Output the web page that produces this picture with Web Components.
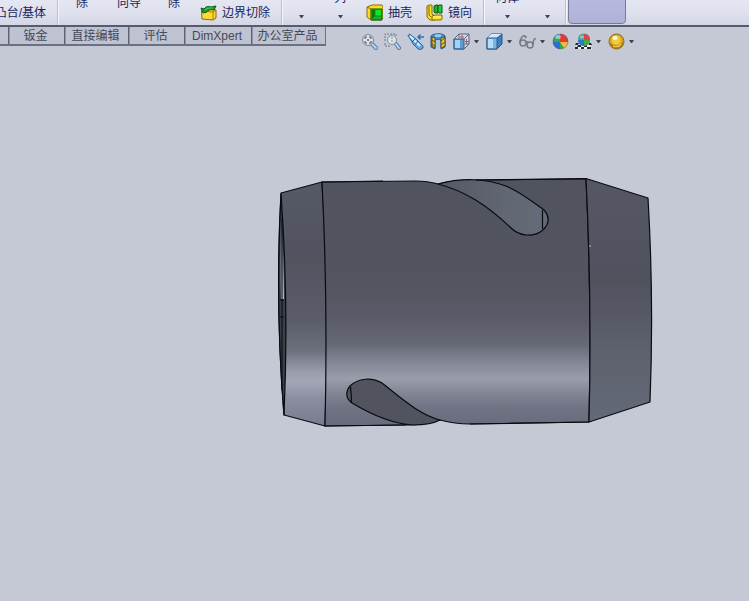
<!DOCTYPE html>
<html lang="zh-CN">
<head>
<meta charset="utf-8">
<title>零件</title>
<style>
html,body{height:100%}
body{margin:0;background:#c5c9d5;font:12px/16px "Liberation Sans","Noto Sans CJK SC",sans-serif;color:#20245c;overflow:hidden}
</style>
</head>
<body>
<cad-app></cad-app>
<script>
const icons = {
boundary:'<path d="M1.500 6.500L6 5l10 1v8l-3 2-11-1z" fill="#ffd936" stroke="#8a6a00"/><path d="M2 7l11 1v8M13 8l3-2" fill="none" stroke="#a87d00"/><path d="M3 9L1 4l3 1c2-3 5-3 7-2l5-1-2 4c-4-1-6 0-7 2z" fill="#1f9b30" stroke="#0b5b17"/><path d="M5 6c2-2 5-2 8-2" fill="none" stroke="#55c862"/>',
shell:'<path d="M1 3l5-2h10l1 2v11l-2 2H5l-4-3z" fill="#f6df20" stroke="#8a7100"/><path d="M5 5h11v11H5z" fill="#12b622" stroke="#075c0c"/><path d="M6 6h3v6l-3 3z" fill="#087a12"/><path d="M9 6h6v6H9z" fill="#18e22e"/><path d="M9 6v6h6M9 12l-3 3" fill="none" stroke="#0a8f18"/><path d="M1 3l4 2v11" fill="none" stroke="#8a7100"/>',
mirror:'<path d="M1 2l2-1h3v9l3 2v4H4l-3-3z" fill="#f8dc24" stroke="#8a6a00"/><path d="M3 2v9l2 2" fill="none" stroke="#8a6a00"/><path d="M8 2l2-1h2v8h-3l-1-1z" fill="#1bb32b" stroke="#075c0c"/><path d="M12 2l1-1h3v8h-3l-1-1z" fill="#26c637" stroke="#075c0c"/><path d="M6 12l3-1h7v4l-1 1H6z" fill="#f8dc24" stroke="#8a6a00"/><path d="M7 13h8" stroke="#fff3a0"/>',
fit:'<path d="M11 11l4 4" stroke="#5880b4" stroke-width="4" stroke-linecap="round"/><path d="M11 11l4 4" stroke="#b8d5ed" stroke-width="2" stroke-linecap="round"/><circle cx="7" cy="7" r="5.500" fill="#dce2ec" stroke="#7b8190"/><path d="M4 6V4h2M8 4h2v2M10 8v2H8M6 10H4V8" fill="none" stroke="#4a5060"/><rect x="6" y="6" width="2" height="2" fill="#7b8290"/>',
area:'<path d="M1 8V1h11v3M1 10v3h5" fill="none" stroke="#737988" stroke-dasharray="2 1"/><path d="M12 11l3 4" stroke="#5880b4" stroke-width="4" stroke-linecap="round"/><path d="M12 11l3 4" stroke="#b8d5ed" stroke-width="2" stroke-linecap="round"/><circle cx="8" cy="7" r="4.500" fill="#dce2ec" stroke="#868c9b"/><path d="M8 4v6" stroke="#8b91a0" stroke-dasharray="2 1"/>',
prev:'<path d="M1 2.500L2.500 1 9 6l2 2 5 5v2l-2 1.500-3-.5-5-5-1-2z" fill="#67a9df" stroke="#2f669e"/><path d="M3 3l5 5 5 5" fill="none" stroke="#d3ebfa" stroke-width="2"/><path d="M5 9l3-3M8 12l3-4" stroke="#2f669e"/><path d="M17 4h-6M13.500 1.500L11 4l2.500 2.500" fill="none" stroke="#2f73b5" stroke-width="1.500"/>',
section:'<path d="M1 3c3-3 12-3 14 0v11l-4 2V7H5v9l-4-2z" fill="#3c8fce" stroke="#275684"/><path d="M4 2c2-1 6-1 8 0l-2 2H6z" fill="#9ccfef"/><path d="M2 4l3 1v10l-3-2zM11 5l4-1v9l-4 2z" fill="#f4ca20" stroke="#5a5130"/><path d="M2 7l3 2M2 11l3 2M11 8l4-3M11 12l4-3" stroke="#5a5130"/><path d="M6 7h4v7l-2 1-2-1z" fill="#a8c8e0"/>',
orient:'<path d="M1 6l5-5h10v10l-5 5H1z" fill="#d4dbe6" stroke="#5a6375"/><path d="M1 6h10v10H1z" fill="#5b9dd2" stroke="#2e5d90"/><path d="M2 7h5v8H2z" fill="#a6d2ef"/><path d="M11 6l5-5M6 1v4M12 11h4" fill="none" stroke="#5a6375"/><path d="M9 2v4M7 4h4M13.500 6v5M12 8.500h4" stroke="#b8525c"/>',
cube:'<path d="M1 5l4-4h11v10l-5 5H1z" fill="#3a7dc2" stroke="#2c5381"/><path d="M1 5l4-4h11l-5 4z" fill="#d0e9fb"/><path d="M1 5h10v11H1z" fill="#79b5e3" stroke="#315b8e"/><path d="M2 6h5v9H2z" fill="#b8dcf4"/><path d="M11 5l5-4" stroke="#315b8e"/>',
glasses:'<g fill="none" stroke="#747b87" stroke-width="1.500"><path d="M1 10C1 5 4 2 6 3s0 2 0 2"/><ellipse cx="4" cy="10" rx="3" ry="3"/><ellipse cx="11" cy="12" rx="3" ry="3"/><path d="M7 9c1-1 2 0 2 1M14 12c0-4 1-7 3-6"/></g>',
ball:'<circle cx="8.500" cy="8.500" r="7.500" fill="#2878cf"/><path d="M8 9V1C4 1 1 4 1 8l1 1z" fill="#36a854"/><path d="M3 4c1-2 3-3 5-3v5z" fill="#4aa6d8"/><path d="M8 9V1c5 0 8 3 8 8z" fill="#e33b31"/><path d="M8 9h8c0 4-3 7-7 7z" fill="#f0bc3d"/><path d="M8 9v7c-4 0-7-3-7-7z" fill="#286fcf"/><path d="M8 9l4 6-4 1z" fill="#32a842"/><ellipse cx="6" cy="4" rx="3" ry="2" fill="#fff" opacity=".4"/><circle cx="8.500" cy="8.500" r="7.500" fill="none" stroke="#58627e" opacity=".5"/>',
scene:'<path d="M3 10h11l3 6H0z" fill="#f2f2f2"/><path d="M1 10h3l-1 2H0zM13 10h3l1 2h-3zM3 12h3v2H2zM9 12h3v2H9zM0 14h3v2H0zM6 14h3v2H6zM12 14h4v2h-4z" fill="#252a32"/><circle cx="9" cy="6.500" r="6" fill="#3992dc"/><path d="M9 7V1c4 0 6 3 6 6z" fill="#df4440"/><path d="M9 7h6c0 4-3 6-6 6z" fill="#41ac3f"/><path d="M9 7v6c-3 0-6-2-6-6z" fill="#2f79cc"/><path d="M9 7V1C5 1 3 4 3 7z" fill="#3fae86"/><ellipse cx="7" cy="4" rx="2" ry="1.500" fill="#fff" opacity=".4"/>',
gold:'<circle cx="8.500" cy="8.500" r="7.500" fill="#d9a520" stroke="#8a6a1e"/><path d="M1 9c3 4 11 5 15-1 0 5-3 8-7 8s-8-3-8-7z" fill="#a87a14"/><circle cx="8" cy="7" r="4.500" fill="#f3cc43"/><ellipse cx="7" cy="5" rx="2.500" ry="2" fill="#fff6c8"/><path d="M5 13c3 1 6 1 8-2" fill="none" stroke="#f0c64c" stroke-width="1.500"/>'
};
class CadIcon extends HTMLElement{connectedCallback(){
 this.attachShadow({mode:'open'}).innerHTML=`<style>:host{display:block;width:17px;height:17px;flex:none}svg{display:block}</style><svg width="17" height="17" viewBox="0 0 17 17" aria-hidden="true">${icons[this.getAttribute('name')]}</svg>`}}
customElements.define('cad-icon',CadIcon);

class CadCaret extends HTMLElement{connectedCallback(){
 this.attachShadow({mode:'open'}).innerHTML='<style>:host{display:block;width:5px;height:3px;flex:none}svg{display:block}</style><svg width="5" height="3" aria-hidden="true"><path d="M0 0h5L3 3H2z" fill="#3f4352"/></svg>'}}
customElements.define('cad-caret',CadCaret);

class RibbonItem extends HTMLElement{connectedCallback(){
 this.attachShadow({mode:'open'}).innerHTML=`<style>
 :host{display:block;flex:none;box-sizing:border-box;width:var(--w,auto)}
 :host([sep]){border-right:1px solid #b9bdcf;box-shadow:1px 0 #f6f7fc}
 button{all:unset;box-sizing:border-box;display:flex;width:100%;height:38px;align-items:center;justify-content:center;gap:5px;white-space:nowrap;padding:13px 0 0}
 :host([kind=high]) button{padding:0 0 6px}
 :host([kind=end]) button{justify-content:flex-end;padding-right:11px}
 :host([kind=drop]) button{flex-direction:column;gap:0;padding:3px 0 0;justify-content:flex-start}
 :host([kind=drop]) .t{height:16px;margin-bottom:9px}
 :host(:not([kind=drop])) cad-caret{display:none}
 :host([kind=on]) button{height:36px;background:linear-gradient(#b9bce0,#b0b2d8);border:1px solid #777a96;border-radius:4px;margin-bottom:1px}
 </style><button type="button" aria-label="${this.getAttribute('label')||this.textContent}"><slot name="icon"></slot><span class="t"><slot></slot></span><cad-caret></cad-caret></button>`}}
customElements.define('ribbon-item',RibbonItem);

class CadRibbon extends HTMLElement{connectedCallback(){
 this.attachShadow({mode:'open'}).innerHTML=`<style>
 :host{display:flex;align-items:flex-end;height:25px;overflow:hidden;background:linear-gradient(#e4e7f1,#dfe1ee 50%,#d4d6e6);border-bottom:2px solid #565b6e}
 </style><slot></slot>`}}
customElements.define('cad-ribbon',CadRibbon);

class CadTabs extends HTMLElement{connectedCallback(){
 this.attachShadow({mode:'open'}).innerHTML=`<style>
 :host{display:flex;flex:none;height:17px;border-bottom:2px solid #6b7082;border-right:1px solid #6b7082;background:#bfc2d1}
 button{all:unset;box-sizing:border-box;border-left:1px solid #5d6275;box-shadow:inset 1px 0 #9296a6;padding-right:2px;text-align:center;color:#454955;line-height:18px;white-space:nowrap}
 i{width:8px}
 </style><i></i>${[['钣金',56],['直接编辑',64],['评估',56],['DimXpert',67],['办公室产品',74]].map(([t,w])=>`<button type="button" style="width:${w}px">${t}</button>`).join('')}`}}
customElements.define('cad-tabs',CadTabs);

class ViewBar extends HTMLElement{connectedCallback(){
 const tools=[['fit','整屏显示全图'],['area','局部放大'],['prev','上一视图'],['section','剖面视图'],['orient','视图定向',1],['cube','显示样式',1],['glasses','隐藏/显示项目',1],['ball','编辑外观'],['scene','应用布景',1],['gold','视图设定',1]];
 this.attachShadow({mode:'open'}).innerHTML=`<style>
 :host{display:flex;align-items:center;gap:6px;height:17px;padding:6px 0 0 35px}
 button{all:unset;display:flex;align-items:center;gap:4px;flex:none}
 .d{margin-right:1px}
 </style>${tools.map(([n,l,d])=>`<button type="button" aria-label="${l}" class="${d?'d':''}"><cad-icon name="${n}"></cad-icon>${d?'<cad-caret></cad-caret>':''}</button>`).join('')}`}}
customElements.define('view-bar',ViewBar);

class CadModel extends HTMLElement{connectedCallback(){
 this.attachShadow({mode:'open'}).innerHTML=`<style>:host{display:block;padding:129px 0 0 275px}svg{display:block}</style>
 <svg width="380" height="255" viewBox="275 175 380 255" role="img" aria-label="套筒零件模型">
 <defs>
 <linearGradient id="body" gradientUnits="userSpaceOnUse" x1="0" y1="178" x2="0" y2="426"><stop offset="0" stop-color="#51535e"/><stop offset=".42" stop-color="#52545f"/><stop offset=".56" stop-color="#595c68"/><stop offset=".67" stop-color="#666975"/><stop offset=".74" stop-color="#828594"/><stop offset=".81" stop-color="#9b9dad"/><stop offset=".86" stop-color="#858897"/><stop offset=".92" stop-color="#707484"/><stop offset="1" stop-color="#676b7b"/></linearGradient>
 <linearGradient id="left" gradientUnits="userSpaceOnUse" x1="0" y1="182" x2="0" y2="426"><stop offset="0" stop-color="#565966"/><stop offset=".3" stop-color="#51535f"/><stop offset=".57" stop-color="#5b5e6a"/><stop offset=".69" stop-color="#6c707d"/><stop offset=".78" stop-color="#9c9eae"/><stop offset=".82" stop-color="#a4a6b6"/><stop offset=".89" stop-color="#898d9f"/><stop offset="1" stop-color="#777b8e"/></linearGradient>
 <linearGradient id="right" gradientUnits="userSpaceOnUse" x1="0" y1="178" x2="0" y2="422"><stop offset="0" stop-color="#555864"/><stop offset=".42" stop-color="#50525e"/><stop offset=".7" stop-color="#5d616d"/><stop offset="1" stop-color="#646979"/></linearGradient>
 <linearGradient id="slot"><stop offset="0" stop-color="#555964"/><stop offset=".65" stop-color="#626774"/><stop offset="1" stop-color="#666b79"/></linearGradient>
 <linearGradient id="bore" x1="0" y1="0" x2="0" y2="1"><stop offset="0" stop-color="#4c505c"/><stop offset=".6" stop-color="#8f94a2"/><stop offset="1" stop-color="#b5b9c6"/></linearGradient>
 </defs>
 <g stroke="#090b10" stroke-width="1.200" stroke-linejoin="round">
 <path d="M281 193L322 182Q330 300 325 426L284 415Q275 305 281 193Z" fill="url(#left)"/>
 <path d="M322 182L415 181Q428 181 438 184Q453 180 476 180L586 178.500Q592 300 589 422L470 424Q455 424 440 420Q425 425 406 425L325 426Q328 300 322 182Z" fill="url(#body)"/>
 <path d="M586 178.500L648 198Q654 300 650 402L589 422Q592 300 586 178.500Z" fill="url(#right)"/>
 <path d="M438 184C460 178 485 178 506 186C522 193 534 203 544 210C550 217 549 224 543 230C533 238 519 236 511 228C487 205 465 191 438 184Z" fill="url(#slot)"/>
 <path d="M542.500 210v19" fill="none"/>
 <path d="M440 420C418 414 400 397 382 383C372 377 358 378 350 386C345 392 346 399 352 403C377 418 396 424 413 425Q431 425 440 420Z" fill="#51535f"/>
 <path d="M350.500 387q1 8 1 16" fill="none"/>
 <path d="M281 194Q289 305 284 415Q275 306 281 194Z" fill="#3b3f49"/>
 <path d="M281 218Q284 253 284 299h-3Q280 250 281 218Z" fill="url(#bore)" stroke="none"/>
 <path d="M280 300h4M280 317h4" fill="none"/><path d="M282 218v172" fill="none" stroke-width="1"/>
 </g>
 <path d="M325 426l81-1M470 424l119-2M322 182l61-1M476 180l110-1" stroke="#090b10"/>
 <path d="M589 246h2" stroke="#b8bcc9"/>
 </svg>`}}
customElements.define('cad-model',CadModel);

class CadApp extends HTMLElement{connectedCallback(){
 this.attachShadow({mode:'open'}).innerHTML=`<style>
 :host{display:block;min-height:100vh}
 nav{display:flex;align-items:flex-start;height:19px}
 </style>
 <cad-ribbon>
 <ribbon-item kind="end" sep style="--w:58px">凸台/基体</ribbon-item>
 <ribbon-item kind="high" style="--w:48px">除</ribbon-item>
 <ribbon-item kind="high" style="--w:46px">向导</ribbon-item>
 <ribbon-item kind="high" style="--w:44px">除</ribbon-item>
 <ribbon-item kind="end" sep style="--w:86px"><cad-icon slot="icon" name="boundary"></cad-icon>边界切除</ribbon-item>
 <ribbon-item kind="drop" label="圆角" style="--w:38px"></ribbon-item>
 <ribbon-item kind="drop" style="--w:40px">列</ribbon-item>
 <ribbon-item style="--w:58px"><cad-icon slot="icon" name="shell"></cad-icon>抽壳</ribbon-item>
 <ribbon-item kind="end" sep style="--w:66px"><cad-icon slot="icon" name="mirror"></cad-icon>镜向</ribbon-item>
 <ribbon-item kind="drop" style="--w:46px">何体</ribbon-item>
 <ribbon-item kind="drop" sep label="曲线" style="--w:36px"></ribbon-item>
 <ribbon-item kind="on" label="Instant3D" style="--w:60px;padding-left:2px"></ribbon-item>
 </cad-ribbon>
 <nav><cad-tabs></cad-tabs><view-bar></view-bar></nav>
 <cad-model></cad-model>`}}
customElements.define('cad-app',CadApp);
</script>
</body>
</html>
